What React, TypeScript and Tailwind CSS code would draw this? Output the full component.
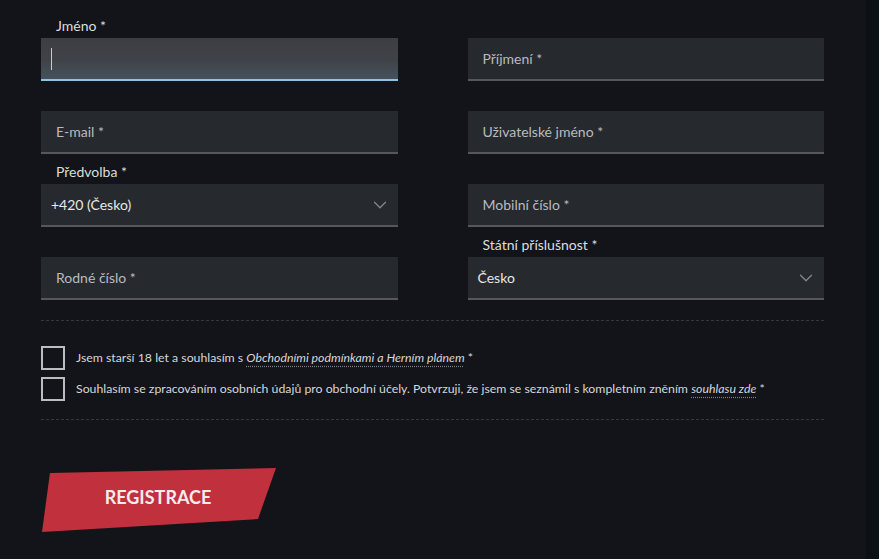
import { ChevronDown } from 'lucide-react'

type Field = {
  label?: string
  placeholder?: string
  value?: string
  select?: boolean
  focused?: boolean
}

const fields: Field[] = [
  { label: 'Jméno *', focused: true },
  { placeholder: 'Příjmení *' },
  { placeholder: 'E-mail *' },
  { placeholder: 'Uživatelské jméno *' },
  { label: 'Předvolba *', value: '+420 (Česko)', select: true },
  { placeholder: 'Mobilní číslo *' },
  { placeholder: 'Rodné číslo *' },
  { label: 'Státní příslušnost *', value: 'Česko', select: true },
]

function FormField({ field }: { field: Field }) {
  return (
    <div className="flex flex-col">
      <div className="h-[30px] flex items-end pb-[3px] pl-[15px] text-[14px] leading-[18px] text-[#dcdddf]">
        {field.label}
      </div>
      {field.focused ? (
        <div className="h-[43px] flex items-center pl-[10px] bg-gradient-to-b from-[#3d3e42] via-[#3f4247] to-[#45515c] border-b-2 border-[#8ec4e2]">
          <span className="w-px h-[22px] bg-[#c9cbce]" />
        </div>
      ) : field.select ? (
        <div className="h-[43px] flex items-center justify-between pl-[10px] pr-[7px] bg-[#26292e] border-b-2 border-[#54575c] text-[14px] text-[#e8e8e9]">
          <span>{field.value}</span>
          <ChevronDown size={22} strokeWidth={1.4} className="text-[#83868b]" />
        </div>
      ) : (
        <div className="h-[43px] flex items-center pl-[15px] bg-[#26292e] border-b-2 border-[#54575c] text-[14px] text-[#b9bbbe]">
          {field.placeholder}
        </div>
      )}
    </div>
  )
}

function Checkbox({ children }: { children: React.ReactNode }) {
  return (
    <div className="flex items-center gap-[11px]">
      <span className="w-[24px] h-[24px] shrink-0 border-2 border-[#bdbdbf]" />
      <p className="text-[12.3px] text-[#d6d7d9]">{children}</p>
    </div>
  )
}

function DocLink({ children }: { children: React.ReactNode }) {
  return (
    <span className="italic underline decoration-dotted decoration-[#7d8085] underline-offset-[4px]">
      {children}
    </span>
  )
}

export default function App() {
  return (
    <div
      className="w-[879px] h-[559px] flex bg-[#121419] overflow-hidden"
      style={{ fontFamily: 'Lato, "Noto Sans", sans-serif' }}
    >
      <div className="flex-1 pl-[41px] pt-[8px]">
        <div className="w-[783px]">
          <div className="grid grid-cols-2 gap-x-[70px]">
            {fields.map((f, i) => (
              <FormField key={i} field={f} />
            ))}
          </div>

          <div className="mt-[20px] border-t border-dashed border-[#34373c]" />

          <div className="mt-[25px] flex flex-col gap-[7px]">
            <Checkbox>
              Jsem starší 18 let a souhlasím s <DocLink>Obchodními podmínkami a Herním plánem</DocLink> *
            </Checkbox>
            <Checkbox>
              Souhlasím se zpracováním osobních údajů pro obchodní účely. Potvrzuji, že jsem se seznámil s
              kompletním zněním <DocLink>souhlasu zde</DocLink> *
            </Checkbox>
          </div>

          <div className="mt-[18px] border-t border-dashed border-[#34373c]" />

          <button className="mt-[48px] ml-[1px] w-[234px] h-[64px] flex items-center justify-center bg-[#c1303d] text-[#f4ecec] text-[18px] font-bold [clip-path:polygon(3.4%_7.8%,100%_0,92.3%_79.7%,0_100%)]">
            <span className="-mt-[6px] -ml-[2px]">REGISTRACE</span>
          </button>
        </div>
      </div>
      <div className="w-[13px] bg-[#0b1115]" />
    </div>
  )
}
